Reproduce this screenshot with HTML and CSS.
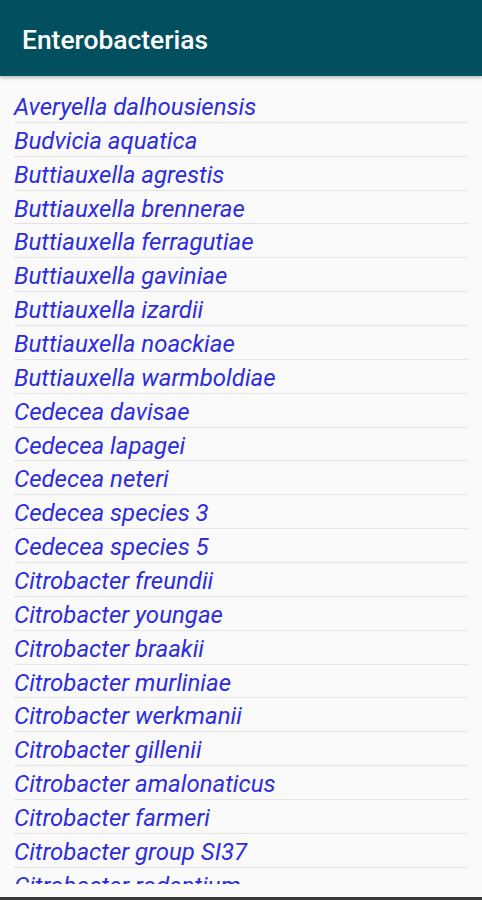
FILE: index.html
```html
<!DOCTYPE html>
<html lang="es">
<head>
  <meta charset="UTF-8" />
  <meta name="viewport" content="width=device-width, initial-scale=1.0" />
  <title>Enterobacterias</title>
  <link rel="stylesheet" href="styles.css">
</head>
<body>
  <div class="app">
    <header class="toolbar">
      <h1>Enterobacterias</h1>
    </header>

    <div class="list-wrap">
      <ul class="species">
        <li>Averyella dalhousiensis</li>
        <li>Budvicia aquatica</li>
        <li>Buttiauxella agrestis</li>
        <li>Buttiauxella brennerae</li>
        <li>Buttiauxella ferragutiae</li>
        <li>Buttiauxella gaviniae</li>
        <li>Buttiauxella izardii</li>
        <li>Buttiauxella noackiae</li>
        <li>Buttiauxella warmboldiae</li>
        <li>Cedecea davisae</li>
        <li>Cedecea lapagei</li>
        <li>Cedecea neteri</li>
        <li>Cedecea species 3</li>
        <li>Cedecea species 5</li>
        <li>Citrobacter freundii</li>
        <li>Citrobacter youngae</li>
        <li>Citrobacter braakii</li>
        <li>Citrobacter murliniae</li>
        <li>Citrobacter werkmanii</li>
        <li>Citrobacter gillenii</li>
        <li>Citrobacter amalonaticus</li>
        <li>Citrobacter farmeri</li>
        <li>Citrobacter group SI37</li>
        <li>Citrobacter rodentium</li>
        <li>Citrobacter sedlakii</li>
      </ul>
    </div>

    <div class="navbar"></div>
  </div>
</body>
</html>
```

FILE: styles.css
```css
html, body { margin: 0; padding: 0; }
body { font-family: Roboto, "Noto Sans", Arial, sans-serif; background: #fafafa; }
.app { height: 900px; display: flex; flex-direction: column; overflow: hidden; }
.toolbar { height: 76px; flex: none; box-sizing: border-box; background: #02505f; display: flex; align-items: center; padding: 4px 22px 0; box-shadow: 0 2px 3px rgba(0,0,0,0.25); position: relative; z-index: 1; }
.toolbar h1 { margin: 0; color: #fff; font-size: 26.4px; font-weight: 500; }
.list-wrap { height: 808px; flex: none; overflow: hidden; padding-top: 13px; box-sizing: border-box; }
.species { list-style: none; margin: 0 14px; padding: 0; }
.species li { height: 30.86px; padding-top: 2px; line-height: 32.86px; border-bottom: 1px solid #e4e4e4; color: #2d2dde; font-style: italic; font-size: 24px; white-space: nowrap; }
.navbar { flex: 1; display: flex; flex-direction: column; justify-content: flex-end; }
.navbar::after { content: ""; display: block; height: 3px; background: #3a3a3a; }
```
